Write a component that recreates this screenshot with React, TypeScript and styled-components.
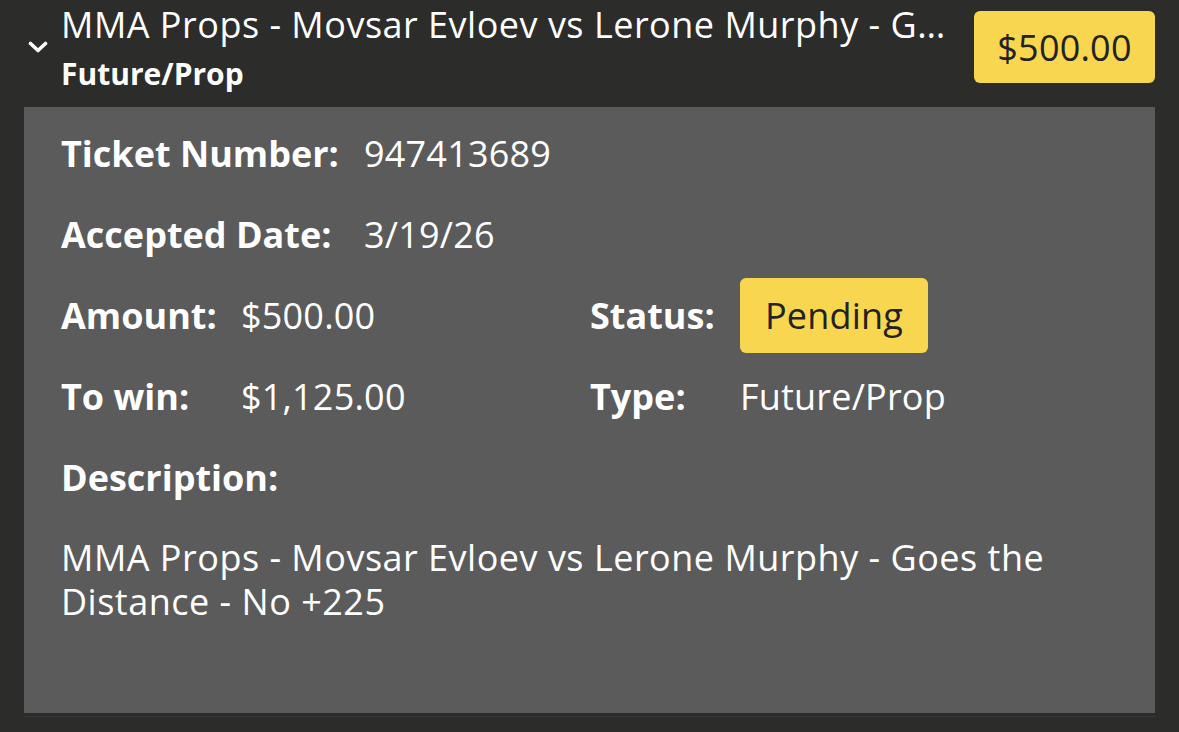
import React from 'react';
import styled, { createGlobalStyle } from 'styled-components';

const GlobalStyle = createGlobalStyle`
  html, body {
    margin: 0;
    padding: 0;
    background: #2c2c2b;
  }
  body {
    font-family: "Open Sans", "Noto Sans", sans-serif;
    color: #ffffff;
  }
`;

const Card = styled.div`
  width: 1179px;
  height: 732px;
  background: #2c2c2b;
  overflow: hidden;
`;

const Header = styled.div`
  display: flex;
  align-items: center;
  padding: 2px 24px 15px 28px;
`;

const Chevron = styled.svg`
  width: 20px;
  height: 12px;
  flex-shrink: 0;
  margin-right: 13px;
`;

const TitleBlock = styled.div`
  flex: 1;
  min-width: 0;
  margin-right: 26px;
`;

const Title = styled.div`
  font-size: 36px;
  font-weight: 500;
  line-height: 46px;
  letter-spacing: 0.5px;
  white-space: nowrap;
  overflow: hidden;
  text-overflow: ellipsis;
`;

const Subtitle = styled.div`
  font-size: 30px;
  font-weight: 700;
  line-height: 36px;
  margin-top: 8px;
`;

const Badge = styled.div<{ $h: number; $w: number }>`
  display: flex;
  align-items: center;
  justify-content: center;
  height: ${(p) => p.$h}px;
  width: ${(p) => p.$w}px;
  background: #f8d64f;
  color: #222222;
  border-radius: 6px;
  font-size: 36px;
  font-weight: 400;
  letter-spacing: 0.2px;
  flex-shrink: 0;
`;

const Panel = styled.div`
  margin: 0 24px;
  background: #5b5b5b;
  padding: 6px 37px 88px;
  height: 606px;
  box-sizing: border-box;
`;

const Row = styled.div`
  display: flex;
  align-items: center;
  height: 81px;
`;

const Label = styled.div<{ $w: number }>`
  width: ${(p) => p.$w}px;
  flex-shrink: 0;
  font-size: 36px;
  font-weight: 700;
  line-height: 44px;
`;

const Value = styled.div<{ $w?: number }>`
  ${(p) => (p.$w ? `width: ${p.$w}px; flex-shrink: 0;` : '')}
  font-size: 36px;
  font-weight: 400;
  line-height: 44px;
  letter-spacing: 0.2px;
`;

const Description = styled.p`
  margin: 18px 0 0;
  font-size: 36px;
  font-weight: 400;
  line-height: 44px;
  letter-spacing: 0.5px;
`;

const BottomRule = styled.div`
  margin: 3px 23px 0 24px;
  height: 1px;
  background: #363636;
`;

const App = () => {
  return (
    <>
      <GlobalStyle />
      <Card>
        <Header>
          <Chevron viewBox="0 0 20 12">
            <path d="M2.5 2.5 L10 9.5 L17.5 2.5" fill="none" stroke="#ffffff" strokeWidth="3.6" strokeLinecap="round" strokeLinejoin="round" />
          </Chevron>
          <TitleBlock>
            <Title>MMA Props - Movsar Evloev vs Lerone Murphy - Goes the Distance - No +225</Title>
            <Subtitle>Future/Prop</Subtitle>
          </TitleBlock>
          <Badge $h={72} $w={181}>$500.00</Badge>
        </Header>
        <Panel>
          <Row>
            <Label $w={303}>Ticket Number:</Label>
            <Value>947413689</Value>
          </Row>
          <Row>
            <Label $w={303}>Accepted Date:</Label>
            <Value>3/19/26</Value>
          </Row>
          <Row>
            <Label $w={180}>Amount:</Label>
            <Value $w={349}>$500.00</Value>
            <Label $w={150}>Status:</Label>
            <Badge $h={75} $w={188}>Pending</Badge>
          </Row>
          <Row>
            <Label $w={180}>To win:</Label>
            <Value $w={349}>$1,125.00</Value>
            <Label $w={150}>Type:</Label>
            <Value>Future/Prop</Value>
          </Row>
          <Row>
            <Label $w={303}>Description:</Label>
          </Row>
          <Description>
            MMA Props - Movsar Evloev vs Lerone Murphy - Goes the Distance - No +225
          </Description>
        </Panel>
        <BottomRule />
      </Card>
    </>
  );
};

export default App;
